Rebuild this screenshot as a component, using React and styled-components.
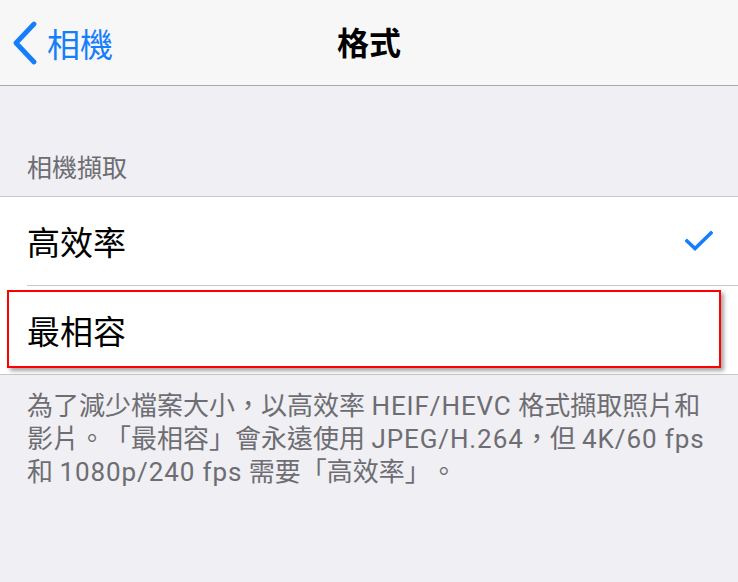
import React from 'react'
import styled, { createGlobalStyle } from 'styled-components'

const GlobalStyle = createGlobalStyle`
  html, body {
    margin: 0;
    padding: 0;
    background: #efeff4;
  }
  body {
    font-family: "Roboto", "Noto Sans CJK TC", sans-serif;
    -webkit-font-smoothing: antialiased;
    text-spacing-trim: space-all;
  }
`;

const Page = styled.div`
  width: 738px;
  height: 582px;
  background: #efeff4;
  overflow: hidden;
`;

const NavBar = styled.header`
  height: 85px;
  background: #f7f7f8;
  border-bottom: 1px solid #a8a8ac;
  display: grid;
  grid-template-columns: 1fr auto 1fr;
  align-items: center;
`;

const BackButton = styled.div`
  display: flex;
  align-items: center;
  padding-left: 12px;
  gap: 9px;
  color: #157efb;
  font-size: 33px;
  line-height: 40px;
  font-family: "Noto Sans CJK TC", sans-serif;
`;

const Title = styled.h1`
  margin: 0;
  font-size: 32px;
  font-weight: 700;
  line-height: 40px;
  color: #000;
  font-family: "Noto Sans CJK TC", sans-serif;
  margin-top: -4px;
`;

const SectionHeader = styled.div`
  padding: 64px 27px 14px;
  font-size: 25px;
  line-height: 32px;
  color: #6d6d72;
  font-family: "Noto Sans CJK TC", sans-serif;
`;

const Group = styled.section`
  background: #fff;
  border-top: 1px solid #c8c7cc;
  border-bottom: 1px solid #c8c7cc;
`;

const Row = styled.div`
  position: relative;
  padding-left: 27px;
`;

const RowInner = styled.div`
  height: 88px;
  display: flex;
  align-items: center;
  justify-content: space-between;
  padding-right: 25px;
  border-bottom: ${p => (p.$last ? 'none' : '1px solid #c8c7cc')};
  font-size: 33px;
  color: #000;
  font-family: "Noto Sans CJK TC", sans-serif;
`;

const Highlight = styled.div`
  position: absolute;
  top: 4px;
  left: 7px;
  width: 714px;
  height: 78px;
  box-sizing: border-box;
  border: 2.5px solid #ff0000;
  box-shadow: 3px 3px 4px rgba(0, 0, 0, 0.35);
`;

const Footer = styled.p`
  margin: 0;
  padding: 15px 27px 0;
  font-size: 26px;
  line-height: 33px;
  color: #6d6d72;
  white-space: nowrap;
  text-spacing-trim: space-all;
`;

const Latin = styled.span`
  letter-spacing: 0.9px;
`;

const Chevron = () => (
  <svg width="26" height="44" viewBox="0 0 26 44">
    <path d="M22 3 L4 22 L22 41" fill="none" stroke="#157efb" strokeWidth="4.8" strokeLinecap="round" strokeLinejoin="round" />
  </svg>
)

const Check = () => (
  <svg width="28" height="22" viewBox="0 0 28 22">
    <path d="M2 11 L10 18.5 L26 3" fill="none" stroke="#157efb" strokeWidth="3.6" strokeLinecap="square" strokeLinejoin="miter" />
  </svg>
)

export default function App() {
  return (
    <Page>
      <GlobalStyle />
      <NavBar>
        <BackButton>
          <Chevron />
          <span>相機</span>
        </BackButton>
        <Title>格式</Title>
        <div />
      </NavBar>
      <SectionHeader>相機擷取</SectionHeader>
      <Group>
        <Row>
          <RowInner>
            <span>高效率</span>
            <Check />
          </RowInner>
        </Row>
        <Row>
          <RowInner $last>
            <span>最相容</span>
          </RowInner>
          <Highlight />
        </Row>
      </Group>
      <Footer>
        為了減少檔案大小，以高效率 <Latin>HEIF/HEVC</Latin> 格式擷取照片和<br />
        影片。「最相容」會永遠使用 <Latin>JPEG/H.264</Latin>，但 <Latin>4K/60 fps</Latin><br />
        和 <Latin>1080p/240 fps</Latin> 需要「高效率」。
      </Footer>
    </Page>
  )
}
